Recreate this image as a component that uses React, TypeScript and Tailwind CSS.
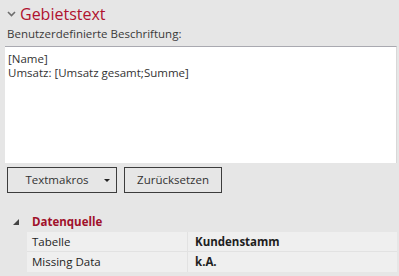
const rows = [
  { label: 'Tabelle', value: 'Kundenstamm' },
  { label: 'Missing Data', value: 'k.A.' },
];

export default function App() {
  return (
    <div
      className="w-[399px] h-[276px] bg-[#e6e6e6] text-[11.5px] text-[#1e1e1e] overflow-hidden"
      style={{ fontFamily: '"Segoe UI", "Open Sans", sans-serif' }}
    >
      {/* Kopf */}
      <div className="flex items-center h-[26px] pl-[7px] pt-[2px]">
        <svg width="9" height="6" viewBox="0 0 9 6">
          <polyline points="1,1 4.5,4.5 8,1" fill="none" stroke="#6e6e6e" strokeWidth="1.6" />
        </svg>
        <span className="ml-[4px] text-[16px] leading-none text-[#b0122e]">Gebietstext</span>
      </div>
      <div className="pl-[7px] h-[20px] leading-[16px] text-[#3a3a3a]">Benutzerdefinierte Beschriftung:</div>

      {/* Textfeld */}
      <div className="ml-[5px] mr-[2px] h-[117px] bg-white border-t border-t-[#a9a9b0] border-r border-r-[#d8d8d8] px-[3px] pt-[5px] leading-[14px] text-[#333]">
        <div>[Name]</div>
        <div>Umsatz: [Umsatz gesamt;Summe]</div>
      </div>

      {/* Buttons */}
      <div className="flex gap-[7px] pl-[7px] mt-[4px]">
        <button className="relative w-[110px] h-[26px] border border-[#3c3c3c] bg-[#e6e6e6] text-[#333] pr-[10px]">
          Textmakros
          <span className="absolute right-[6px] top-[11px] w-0 h-0 border-l-[3px] border-r-[3px] border-t-[3px] border-l-transparent border-r-transparent border-t-[#222]" />
        </button>
        <button className="w-[98px] h-[26px] border border-[#3c3c3c] bg-[#e6e6e6] text-[#333]">Zurücksetzen</button>
      </div>

      {/* Eigenschaften */}
      <div className="mt-[19px] flex items-center h-[20px]">
        <svg width="6" height="6" viewBox="0 0 6 6" className="ml-[13px]">
          <polygon points="6,0 6,6 0,6" fill="#444" />
        </svg>
        <span className="ml-[13px] font-bold text-[#a0102a]">Datenquelle</span>
      </div>
      <div className="ml-[27px] mr-[2px]">
        {rows.map(r => (
          <div key={r.label} className="flex h-[20px] bg-[#efefef] border-b border-[#e2e2e2] last:border-b-0">
            <div className="w-[161px] pl-[5px] leading-[20px] border-r border-[#e2e2e2]">{r.label}</div>
            <div className="pl-[7px] leading-[20px] font-bold">{r.value}</div>
          </div>
        ))}
      </div>
    </div>
  );
}
